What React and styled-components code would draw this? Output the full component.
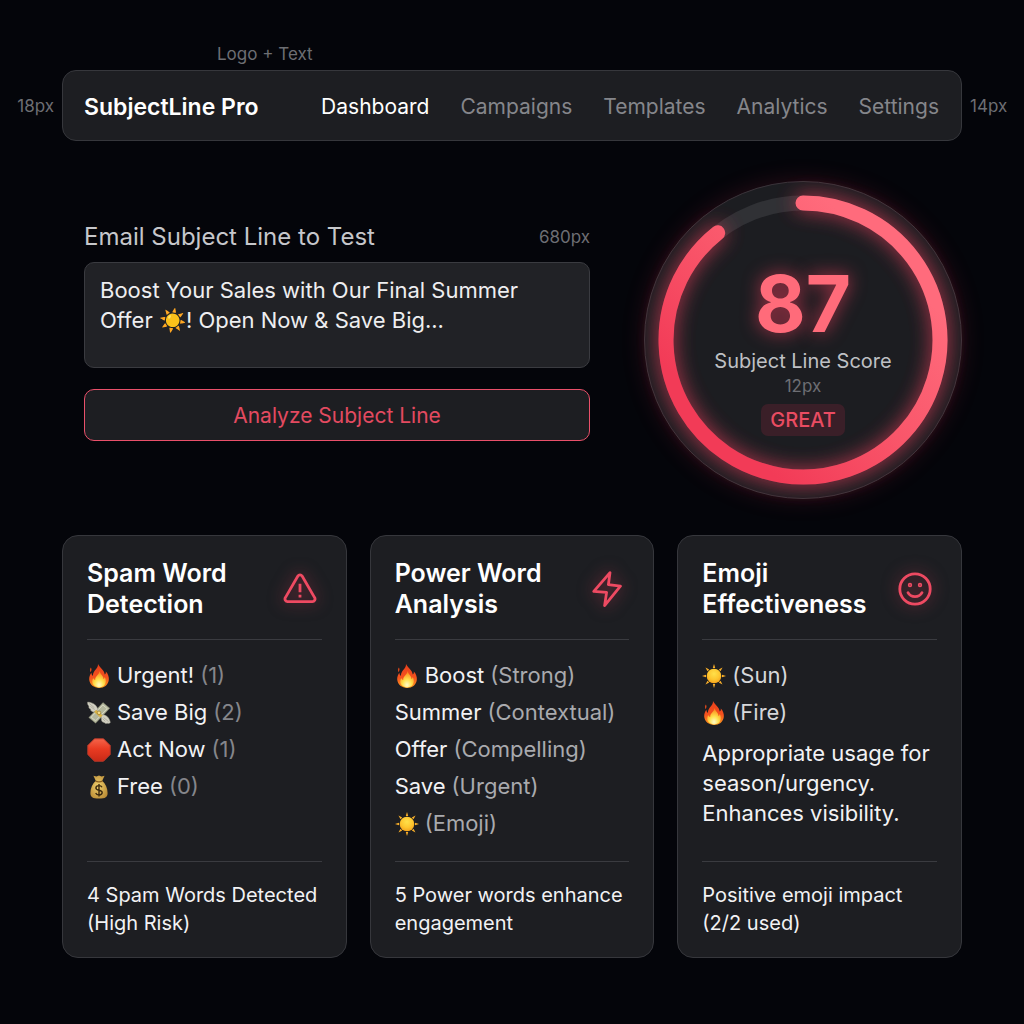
import React, { useState } from 'react'
import styled, { createGlobalStyle } from 'styled-components'

const navItems = ['Dashboard', 'Campaigns', 'Templates', 'Analytics', 'Settings']

const spamWords = [
    { emoji: 'fire', word: 'Urgent!', note: '(1)' },
    { emoji: 'money', word: 'Save Big', note: '(2)' },
    { emoji: 'stop', word: 'Act Now', note: '(1)' },
    { emoji: 'bag', word: 'Free', note: '(0)' },
]

const powerWords = [
    { emoji: 'fire', word: 'Boost', note: '(Strong)' },
    { word: 'Summer', note: '(Contextual)' },
    { word: 'Offer', note: '(Compelling)' },
    { word: 'Save', note: '(Urgent)' },
    { emoji: 'sun', note: '(Emoji)' },
]

const emojiWords = [
    { emoji: 'sun', note: '(Sun)' },
    { emoji: 'fire', note: '(Fire)' },
]

const SunEmoji = () => (
    <EmojiSvg viewBox="0 0 24 24" role="img" aria-label="sun">
        <defs>
            <radialGradient id="sunFill" cx="50%" cy="35%" r="65%">
                <stop offset="0" stopColor="#ffe04a" />
                <stop offset="0.6" stopColor="#fdc62f" />
                <stop offset="1" stopColor="#f5a31c" />
            </radialGradient>
        </defs>
        {[0, 45, 90, 135, 180, 225, 270, 315].map((angle) => (
            <path key={angle} d="M12 0 L13.2 4 H10.8 Z" fill="#fbb02a" transform={`rotate(${angle} 12 12)`} />
        ))}
        <circle cx="12" cy="12" r="7.3" fill="url(#sunFill)" />
    </EmojiSvg>
)

const FireEmoji = () => (
    <EmojiSvg viewBox="0 0 24 24" role="img" aria-label="fire">
        <defs>
            <linearGradient id="fireOuter" x1="0" y1="0" x2="0" y2="1">
                <stop offset="0" stopColor="#e8401c" />
                <stop offset="0.55" stopColor="#f4511e" />
                <stop offset="1" stopColor="#fb9a1e" />
            </linearGradient>
            <radialGradient id="fireInner" cx="50%" cy="85%" r="75%">
                <stop offset="0" stopColor="#fffbc8" />
                <stop offset="0.45" stopColor="#ffe14d" />
                <stop offset="1" stopColor="#fb8c1e" />
            </radialGradient>
        </defs>
        <path
            d="M11 0 C12.5 3.5 17.5 6 17.7 10.6 C18.8 10 19 8.6 18.8 7.6 C21 9.8 22.2 13 21.8 16 C21.2 21 17 24 12.2 24 C7 24 2.6 20.8 2.2 15.6 C2 12.6 3.2 10.4 4.4 8.8 C4.5 10.3 5 11.4 6 11.9 C5.6 6.5 11.4 5 11 0 Z"
            fill="url(#fireOuter)"
        />
        <path d="M3.9 3.6 C4.8 5.2 4.8 6.4 3.6 8.2 C2.6 6.8 2.8 5 3.9 3.6 Z" fill="#d9481c" />
        <path
            d="M12.6 7 C13.2 10.6 16.6 11.6 16.4 15 C17.2 14.6 17.6 13.8 17.7 13 C19.6 16 19 20 16.6 22 C13.6 24 9.6 23.8 7 21.6 C4.8 19.6 4.8 16.4 6.2 14 C6.6 15.2 7.2 15.8 8.2 16 C7.8 12 12.4 11 12.6 7 Z"
            fill="url(#fireInner)"
        />
    </EmojiSvg>
)

const MoneyEmoji = () => (
    <EmojiSvg viewBox="0 0 24 24" role="img" aria-label="money with wings">
        <path d="M16 1.6 L22.8 7.2 L8.6 22.2 L1.8 16.6 Z" fill="#b3b69c" stroke="#787b66" strokeWidth="0.5" />
        <path d="M15.8 4 L20.2 7.6 L8.6 19.8 L4.2 16.2 Z" fill="none" stroke="#d8d8c4" strokeWidth="1" />
        <g fill="#d2d0c2" stroke="#8f8e80" strokeWidth="0.5">
            <path d="M11 9 C10.4 5 7 1.6 0.6 1 C0.2 3 1 4.4 2 5 C1.2 6.4 2.4 7.8 3.6 8 C3.2 9.6 5 11 6.6 11 Z" />
            <path d="M14 14 C17 13.4 21.6 14.4 23.4 21.4 C22.4 22.6 21.2 22.6 20.2 22.2 C19.2 22.8 17.8 22.4 17.2 21.4 C15.6 21.4 14.6 20.2 14.4 19 Z" />
        </g>
        <path d="M9.2 8.8 L15.6 14.4 L13.4 16.4 L7.2 11 Z" fill="#d9b243" />
        <circle cx="12" cy="11.8" r="1.8" fill="#f3dc88" stroke="#8c7126" strokeWidth="0.6" />
        <path d="M2.2 2.4 L7.4 6.8 M3.4 5.4 L7.6 8.6 M21.6 20.6 L16.6 16.6 M18.4 20.4 L15.6 17.6" stroke="#98978a" strokeWidth="0.6" />
    </EmojiSvg>
)

const StopEmoji = () => (
    <EmojiSvg viewBox="0 0 24 24" role="img" aria-label="stop sign">
        <defs>
            <linearGradient id="stopFill" x1="0" y1="0" x2="0" y2="1">
                <stop offset="0" stopColor="#f4644a" />
                <stop offset="0.45" stopColor="#e93b22" />
                <stop offset="1" stopColor="#c92a17" />
            </linearGradient>
        </defs>
        <path
            d="M7.5 0.8 H16.5 L23.2 7.5 V16.5 L16.5 23.2 H7.5 L0.8 16.5 V7.5 Z"
            fill="url(#stopFill)"
            stroke="#b8392a"
            strokeWidth="1"
            strokeLinejoin="round"
        />
    </EmojiSvg>
)

const BagEmoji = () => (
    <EmojiSvg viewBox="0 0 24 24" role="img" aria-label="money bag">
        <defs>
            <radialGradient id="bagFill" cx="45%" cy="45%" r="65%">
                <stop offset="0" stopColor="#efcf6d" />
                <stop offset="1" stopColor="#b98a34" />
            </radialGradient>
        </defs>
        <path
            d="M6.4 0.8 L9.4 1.6 L12 0.6 L14.6 1.6 L17.6 0.8 L15.2 5.8 C18.6 9 20.6 13 20.6 18 C20.6 22 18.6 23.6 12 23.6 C5.4 23.6 3.4 22 3.4 18 C3.4 13 5.4 9 8.8 5.8 Z"
            fill="url(#bagFill)"
        />
        <path d="M8.4 6.2 Q12 7.6 15.6 6.2" fill="none" stroke="#8a5f20" strokeWidth="1.4" />
        <path
            d="M15 12.2 C14.4 11 13.4 10.6 12 10.6 C10 10.6 8.9 11.6 8.9 13 C8.9 16.2 15.2 14.4 15.2 17.6 C15.2 19.2 13.8 20 12 20 C10.2 20 9.2 19.2 8.7 18 M12 9 V21.6"
            fill="none"
            stroke="#3c2a10"
            strokeWidth="1.4"
        />
    </EmojiSvg>
)

const emojis = { sun: SunEmoji, fire: FireEmoji, money: MoneyEmoji, stop: StopEmoji, bag: BagEmoji }

const AlertIcon = () => (
    <IconSvg viewBox="0 0 36 36" aria-hidden="true">
        <path d="M15.9 5 L3.4 26.6 A2.6 2.6 0 0 0 5.7 30.6 H30.3 A2.6 2.6 0 0 0 32.6 26.6 L20.1 5 A2.5 2.5 0 0 0 15.9 5 Z" />
        <path d="M18 12.7 V21.3 M18 23.8 V26.4" strokeLinecap="butt" />
    </IconSvg>
)

const BoltIcon = () => (
    <IconSvg viewBox="0 0 36 36" aria-hidden="true">
        <path d="M21 1.6 L4.8 20.4 L17.6 21.4 L15.6 34.6 L31.4 15.2 L19.4 13.6 Z" />
    </IconSvg>
)

const SmileIcon = () => (
    <IconSvg viewBox="0 0 36 36" aria-hidden="true">
        <circle cx="18" cy="18" r="15.2" />
        <path d="M11 21.6 C14 27 22 27 25 21.6" />
        <circle cx="13" cy="14" r="0.8" />
        <circle cx="23" cy="14" r="0.8" />
    </IconSvg>
)

const WordList = ({ items, tone }) => (
    <List>
        {items.map(({ emoji, word, note }) => {
            const Emoji = emojis[emoji]
            return (
                <Row key={note + word}>
                    {Emoji && <Emoji />}
                    {word && <span>{word}</span>}
                    <Note $tone={tone}>{note}</Note>
                </Row>
            )
        })}
    </List>
)

const ResultCard = ({ title, icon, footer, children }) => (
    <Card>
        <CardHeader>
            <h2>{title}</h2>
            {icon}
        </CardHeader>
        <CardBody>{children}</CardBody>
        <CardFooter>{footer}</CardFooter>
    </Card>
)

const ScoreGauge = ({ score }) => (
    <Gauge>
        <GaugeRing viewBox="0 0 318 318" aria-hidden="true">
            <defs>
                <linearGradient id="ringFill" x1="0.8" y1="0.2" x2="0.2" y2="0.8">
                    <stop offset="0" stopColor="#ff6b7c" />
                    <stop offset="0.5" stopColor="#f9566a" />
                    <stop offset="1" stopColor="#f23b57" />
                </linearGradient>
                <filter id="ringGlow" x="-20%" y="-20%" width="140%" height="140%">
                    <feGaussianBlur stdDeviation="10" />
                </filter>
            </defs>
            <circle cx="159" cy="159" r="137" stroke="#303135" />
            <path d="M159 22 A137 137 0 1 1 73.7 51.8" stroke="#f43f5e" opacity="0.75" filter="url(#ringGlow)" />
            <path d="M159 22 A137 137 0 1 1 73.7 51.8" stroke="url(#ringFill)" />
        </GaugeRing>
        <Score>{score}</Score>
        <ScoreLabel>Subject Line Score</ScoreLabel>
        <Hint>12px</Hint>
        <Badge>GREAT</Badge>
    </Gauge>
)

const App = () => {
    const [subject, setSubject] = useState('Boost Your Sales with Our Final Summer Offer ☀️! Open Now & Save Big...')

    return (
        <Page>
            <GlobalStyle />
            <TopNote>Logo + Text</TopNote>
            <HeaderRow>
                <Hint>18px</Hint>
                <Header>
                    <Brand>SubjectLine Pro</Brand>
                    <Nav>
                        {navItems.map((item, index) => (
                            <NavLink key={item} href="#" $active={index === 0}>{item}</NavLink>
                        ))}
                    </Nav>
                </Header>
                <Hint>14px</Hint>
            </HeaderRow>
            <Content>
                <Hero>
                    <Form onSubmit={(e) => e.preventDefault()}>
                        <FieldHead>
                            <label htmlFor="subject">Email Subject Line to Test</label>
                            <Hint>680px</Hint>
                        </FieldHead>
                        <SubjectInput id="subject" value={subject} onChange={(e) => setSubject(e.target.value)} />
                        <AnalyzeButton>Analyze Subject Line</AnalyzeButton>
                    </Form>
                    <ScoreGauge score={87} />
                </Hero>
                <Cards>
                    <ResultCard title="Spam Word Detection" icon={<AlertIcon />} footer="4 Spam Words Detected (High Risk)">
                        <WordList items={spamWords} tone="#85868b" />
                    </ResultCard>
                    <ResultCard title="Power Word Analysis" icon={<BoltIcon />} footer="5 Power words enhance engagement">
                        <WordList items={powerWords} tone="#a9aaae" />
                    </ResultCard>
                    <ResultCard title="Emoji Effectiveness" icon={<SmileIcon />} footer="Positive emoji impact (2/2 used)">
                        <WordList items={emojiWords} tone="#d6d7da" />
                        <Advice>Appropriate usage for season/urgency. Enhances visibility.</Advice>
                    </ResultCard>
                </Cards>
            </Content>
        </Page>
    )
}

export default App


const GlobalStyle = createGlobalStyle`
    * {
        box-sizing: border-box;
        margin: 0;
        padding: 0;
    }
    body {
        background: #04050a;
        color: #f2f2f4;
        font-family: Inter, "Liberation Sans", sans-serif;
    }
`;

const Page = styled.div`
    min-height: 100vh;
    padding: 40px 0 64px;
`;

const Hint = styled.span`
    color: #6d6e73;
    font-size: 17px;
    line-height: 24px;
`;

const TopNote = styled(Hint)`
    display: block;
    padding: 2px 0 4px 217px;
`;

const HeaderRow = styled.div`
    display: grid;
    grid-template-columns: 54px 1fr 54px;
    gap: 8px;
    align-items: center;

    > ${Hint}:first-child {
        text-align: right;
    }
`;

const Header = styled.header`
    display: flex;
    align-items: center;
    justify-content: space-between;
    height: 71px;
    padding: 2px 22px 0 21px;
    background: #1d1e22;
    border: 1px solid #36373c;
    border-radius: 14px;
`;

const Brand = styled.div`
    font-size: 23px;
    font-weight: 600;
    color: #fff;
`;

const Nav = styled.nav`
    display: flex;
    gap: 31px;
`;

const NavLink = styled.a`
    font-size: 21px;
    line-height: 28px;
    text-decoration: none;
    color: ${({ $active }) => ($active ? '#ffffff' : '#85868b')};
`;

const Content = styled.main`
    padding: 0 62px;
`;

const Hero = styled.section`
    display: flex;
    align-items: center;
    gap: 54px;
    padding: 40px 0 36px 22px;
`;

const Form = styled.form`
    flex: 1;
    display: flex;
    flex-direction: column;
    padding-bottom: 18px;
`;

const FieldHead = styled.div`
    display: flex;
    align-items: center;
    justify-content: space-between;
    margin-bottom: 9px;

    label {
        color: #c6c7cb;
        font-size: 24px;
        line-height: 32px;
    }
`;

const SubjectInput = styled.textarea`
    height: 106px;
    padding: 12px 15px;
    resize: none;
    outline: none;
    background: #212226;
    border: 1px solid #3a3b40;
    border-radius: 10px;
    color: #eeeef0;
    font-family: inherit;
    font-size: 22px;
    line-height: 30px;
`;

const AnalyzeButton = styled.button`
    height: 52px;
    margin-top: 21px;
    background: #1d1e22;
    border: 1px solid #e9506a;
    border-radius: 10px;
    color: #e34a60;
    font-family: inherit;
    font-size: 21px;
    cursor: pointer;
`;

const Gauge = styled.div`
    position: relative;
    display: flex;
    flex-direction: column;
    align-items: center;
    width: 318px;
    height: 318px;
    padding-top: 78px;
    border: 1px solid #3a343a;
    border-radius: 50%;
    background: #1c1d21;
    box-shadow: 0 0 24px rgba(244, 63, 94, 0.16);

    > * {
        z-index: 1;
    }
`;

const GaugeRing = styled.svg`
    position: absolute;
    inset: -1px;
    z-index: 0;
    overflow: visible;
    fill: none;
    stroke-width: 15;
    stroke-linecap: round;
`;

const Score = styled.div`
    color: #ff6b7a;
    font-size: 78px;
    font-weight: 700;
    line-height: 88px;
    text-shadow: 0 0 18px rgba(244, 63, 94, 0.7);
`;

const ScoreLabel = styled.div`
    color: #bfc0c4;
    font-size: 20px;
    line-height: 26px;
`;

const Badge = styled.div`
    margin-top: 6px;
    padding: 0 9px;
    border-radius: 7px;
    background: #3a1f28;
    color: #ea4c62;
    font-size: 20px;
    font-weight: 500;
    line-height: 32px;
`;

const Cards = styled.section`
    display: grid;
    grid-template-columns: repeat(3, 1fr);
    gap: 23px;
`;

const Card = styled.article`
    display: flex;
    flex-direction: column;
    padding: 22px 24px 20px;
    background: #1d1e22;
    border: 1px solid #36373c;
    border-radius: 16px;
`;

const CardHeader = styled.header`
    display: flex;
    align-items: center;
    justify-content: space-between;
    padding-bottom: 19px;
    border-bottom: 1px solid #3a3b40;

    h2 {
        width: min-content;
        min-width: 170px;
        color: #fff;
        font-size: 25px;
        font-weight: 600;
        line-height: 31px;
    }
`;

const IconSvg = styled.svg`
    flex-shrink: 0;
    width: 36px;
    height: 36px;
    margin-right: 4px;
    overflow: visible;
    fill: none;
    stroke: #ee4a62;
    stroke-width: 2.8;
    stroke-linecap: round;
    stroke-linejoin: round;
    filter: drop-shadow(0 0 8px rgba(244, 63, 94, 0.5));
`;

const EmojiSvg = styled.svg`
    flex-shrink: 0;
    width: 24px;
    height: 24px;
`;

const CardBody = styled.div`
    flex: 1;
    min-height: 221px;
    padding: 17px 0;
`;

const List = styled.ul`
    list-style: none;
`;

const Row = styled.li`
    display: flex;
    align-items: center;
    gap: 6px;
    font-size: 22px;
    line-height: 37px;
`;

const Note = styled.span`
    color: ${({ $tone }) => $tone};
`;

const Advice = styled.p`
    padding-top: 7px;
    font-size: 22px;
    line-height: 30px;
`;

const CardFooter = styled.footer`
    padding-top: 19px;
    border-top: 1px solid #3a3b40;
    font-size: 20px;
    line-height: 28px;
`;
